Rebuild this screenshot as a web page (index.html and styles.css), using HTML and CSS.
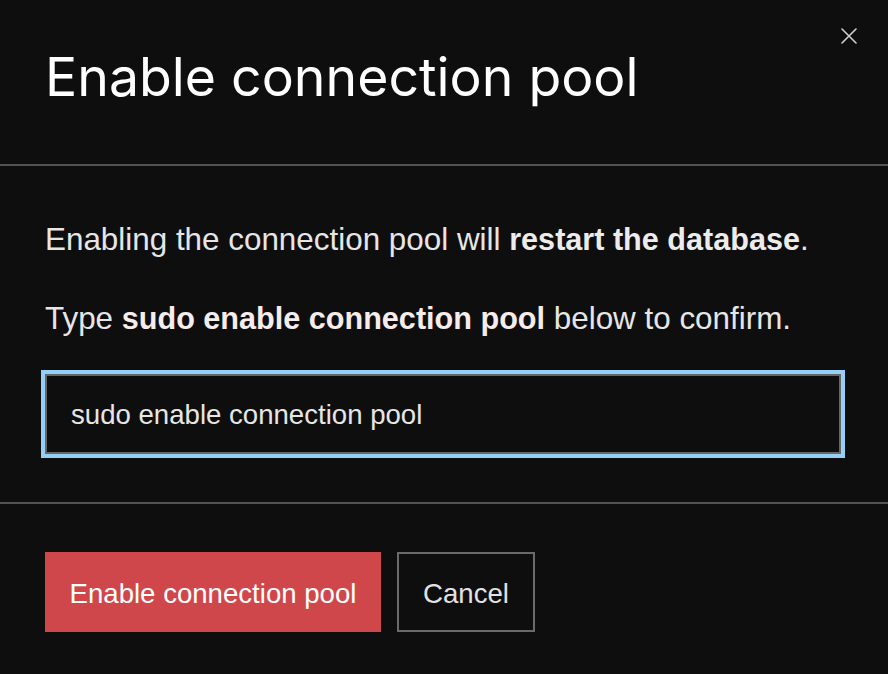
FILE: index.html
```html
<!DOCTYPE html>
<html lang="en">
<head>
<meta charset="utf-8">
<title>Enable connection pool</title>
<link rel="stylesheet" href="styles.css">
</head>
<body>
<div class="modal">
  <header class="modal-header">
    <h1 class="modal-title">Enable connection pool</h1>
    <button class="close-btn" aria-label="Close">
      <svg width="16" height="16" viewBox="0 0 16 16" fill="none" stroke="#cfcfcf" stroke-width="1.6" stroke-linecap="round">
        <path d="M1 1 L15 15 M15 1 L1 15"/>
      </svg>
    </button>
  </header>
  <section class="modal-body">
    <p class="msg">Enabling the connection pool will <strong>restart the database</strong>.</p>
    <p class="msg">Type <strong class="phrase">sudo enable connection pool</strong> below to confirm.</p>
    <input class="confirm-input" type="text" value="sudo enable connection pool">
  </section>
  <footer class="modal-footer">
    <button class="btn btn-danger">Enable connection pool</button>
    <button class="btn btn-secondary">Cancel</button>
  </footer>
</div>
</body>
</html>
```
FILE: styles.css
```css
html, body {
  margin: 0;
  padding: 0;
  background: #0e0e0e;
}
body {
  font-family: "Liberation Sans", Arial, sans-serif;
  color: #e6e6e6;
}
.modal {
  width: 888px;
  height: 674px;
  background: #0e0e0e;
  overflow: hidden;
}
.modal-header {
  position: relative;
  height: 115px;
  padding: 49px 47px 0 45px;
  border-bottom: 2px solid #525252;
}
.modal-title {
  margin: 0;
  font-family: "Inter", sans-serif;
  font-weight: 400;
  font-size: 53.6px;
  line-height: 56px;
  color: #ffffff;
}
.close-btn {
  position: absolute;
  top: 28px;
  right: 31px;
  width: 16px;
  height: 16px;
  padding: 0;
  border: 0;
  background: transparent;
  display: block;
}
.close-btn svg {
  display: block;
}
.modal-body {
  padding: 55px 47px 48px 45px;
  border-bottom: 2px solid #525252;
}
.msg {
  margin: 0 0 42px 0;
  font-size: 31.4px;
  line-height: 37px;
  color: #e6e6e6;
}
.msg strong {
  font-size: 30.6px;
  line-height: 1;
  font-weight: 700;
  color: #ececec;
}
.msg strong.phrase {
  color: #f7ecec;
}
.msg:last-of-type {
  margin-bottom: 37px;
}
.confirm-input {
  display: block;
  box-sizing: border-box;
  width: 796px;
  height: 80px;
  margin: 0;
  padding: 2px 0 0 24px;
  border: 2px solid #666666;
  outline: 4px solid #96cff6;
  background: #0e0e0e;
  color: #e6e6e6;
  font-family: "Liberation Sans", Arial, sans-serif;
  font-size: 27.6px;
}
.modal-footer {
  display: flex;
  gap: 16px;
  padding: 48px 45px 0 45px;
}
.btn {
  box-sizing: border-box;
  height: 80px;
  padding: 3px 0 0 0;
  font-family: "Liberation Sans", Arial, sans-serif;
  font-size: 27.6px;
  cursor: pointer;
}
.btn-danger {
  width: 336px;
  border: 0;
  background: #d0474b;
  color: #ffffff;
}
.btn-secondary {
  width: 138px;
  border: 2px solid #6a6a6a;
  background: #0e0e0e;
  color: #e2e2e2;
}
```
